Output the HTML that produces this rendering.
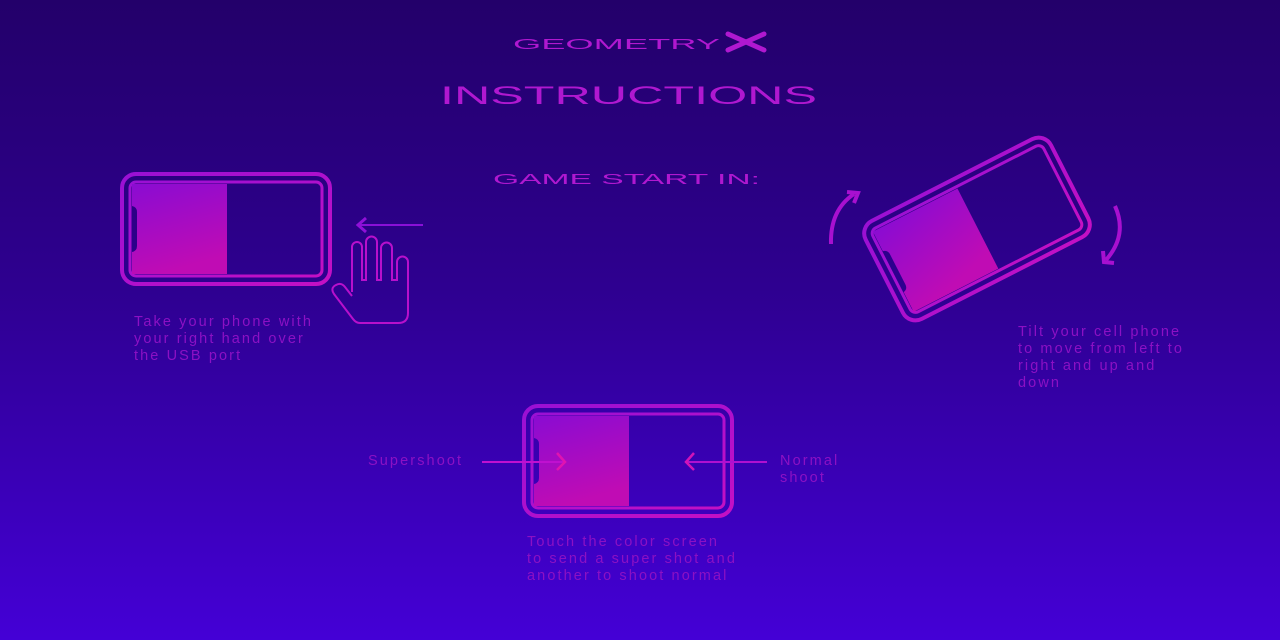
<!DOCTYPE html>
<html><head><meta charset="utf-8"><style>
html,body{margin:0;padding:0;}
body{width:1280px;height:640px;overflow:hidden;background:linear-gradient(#23006a,#2e0090 45%,#4400d6);}
svg{display:block;}
</style></head><body>
<svg width="1280" height="640" viewBox="0 0 1280 640" xmlns="http://www.w3.org/2000/svg">
<defs>
<linearGradient id="scr" x1="0" y1="0" x2="0.3" y2="1">
<stop offset="0" stop-color="#8a0cd2"/><stop offset="1" stop-color="#c00cb4"/>
</linearGradient>
<linearGradient id="strk" x1="0" y1="0" x2="1" y2="1">
<stop offset="0" stop-color="#9a10d4"/><stop offset="1" stop-color="#c410c4"/>
</linearGradient>
<g id="phone">
<rect x="2" y="2" width="208" height="110" rx="14" fill="none" stroke="url(#strk)" stroke-width="4"/>
<rect x="10" y="10" width="192" height="94" rx="6" fill="none" stroke="url(#strk)" stroke-width="3"/>
<path d="M12,12 L107,12 L107,102 L12,102 L12,80 Q17,79 17,74 L17,40 Q17,35 12,34 Z" fill="url(#scr)"/>
</g>
</defs>
<g font-family="Liberation Sans, sans-serif" fill="#b018d0">
<text x="513" y="49" font-size="15" textLength="207" lengthAdjust="spacingAndGlyphs">GEOMETRY</text>
<text x="440" y="104" font-size="25" textLength="377" lengthAdjust="spacingAndGlyphs">INSTRUCTIONS</text>
<text x="493" y="184" font-size="15" textLength="267" lengthAdjust="spacingAndGlyphs">GAME START IN:</text>
</g>
<path d="M728,34 L764,50 M728,50 L764,34" stroke="#b018d0" stroke-width="5" stroke-linecap="round"/>

<use href="#phone" x="120" y="172"/>
<use href="#phone" x="522" y="404"/>
<g transform="translate(977,229) rotate(-27) translate(-106,-57)"><use href="#phone"/></g>

<path d="M360,225 L423,225" stroke="#8a10d8" stroke-width="2"/>
<path d="M366,218 L358,225 L366,232" fill="none" stroke="#9010d8" stroke-width="3"/>
<path d="M352,292 L352,247 A5,5 0 0 1 362,247 L362,280 L366,280 L366,242 A5.5,5.5 0 0 1 377,242 L377,280 L381,280 L381,248 A5.5,5.5 0 0 1 392,248 L392,280 L397,280 L397,262 A5.5,5.5 0 0 1 408,262 L408,313 Q408,323 398,323 L360,323 Q356,323 353,319 L334,294 Q330,288 336,285 Q341,282 345,287 L352,296" fill="none" stroke="#b810cc" stroke-width="2"/>

<path d="M831,244 Q830,210 854,194" fill="none" stroke="#a810d0" stroke-width="4"/>
<path d="M847,192 L858,193 L854,203" fill="none" stroke="#a810d0" stroke-width="4"/>
<path d="M1115,206 Q1128,235 1106,260" fill="none" stroke="#a810d0" stroke-width="4"/>
<path d="M1103,251 L1104,262 L1114,263" fill="none" stroke="#a810d0" stroke-width="4"/>

<path d="M482,462 L564,462" stroke="#c010d0" stroke-width="2"/>
<path d="M557,453 L565,462 L557,470" fill="none" stroke="#e014b0" stroke-width="2.5"/>
<path d="M686,462 L767,462" stroke="#b010d0" stroke-width="2"/>
<path d="M694,453 L686,462 L694,470" fill="none" stroke="#d014b8" stroke-width="2.5"/>

<g font-family="Liberation Sans, sans-serif" font-size="14.5" fill="#8c10c4" letter-spacing="2.1">
<text x="134" y="326">Take your phone with</text>
<text x="134" y="343">your right hand over</text>
<text x="134" y="360">the USB port</text>
<text x="1018" y="336"> Tilt your cell phone</text>
<text x="1018" y="353">to move from left to</text>
<text x="1018" y="370">right and up and</text>
<text x="1018" y="387">down</text>
<text x="527" y="546">Touch the color screen</text>
<text x="527" y="563">to send a super shot and</text>
<text x="527" y="580">another to shoot normal</text>
<text x="368" y="465">Supershoot</text>
<text x="780" y="465">Normal</text>
<text x="780" y="482">shoot</text>
</g>
</svg>
</body></html>
